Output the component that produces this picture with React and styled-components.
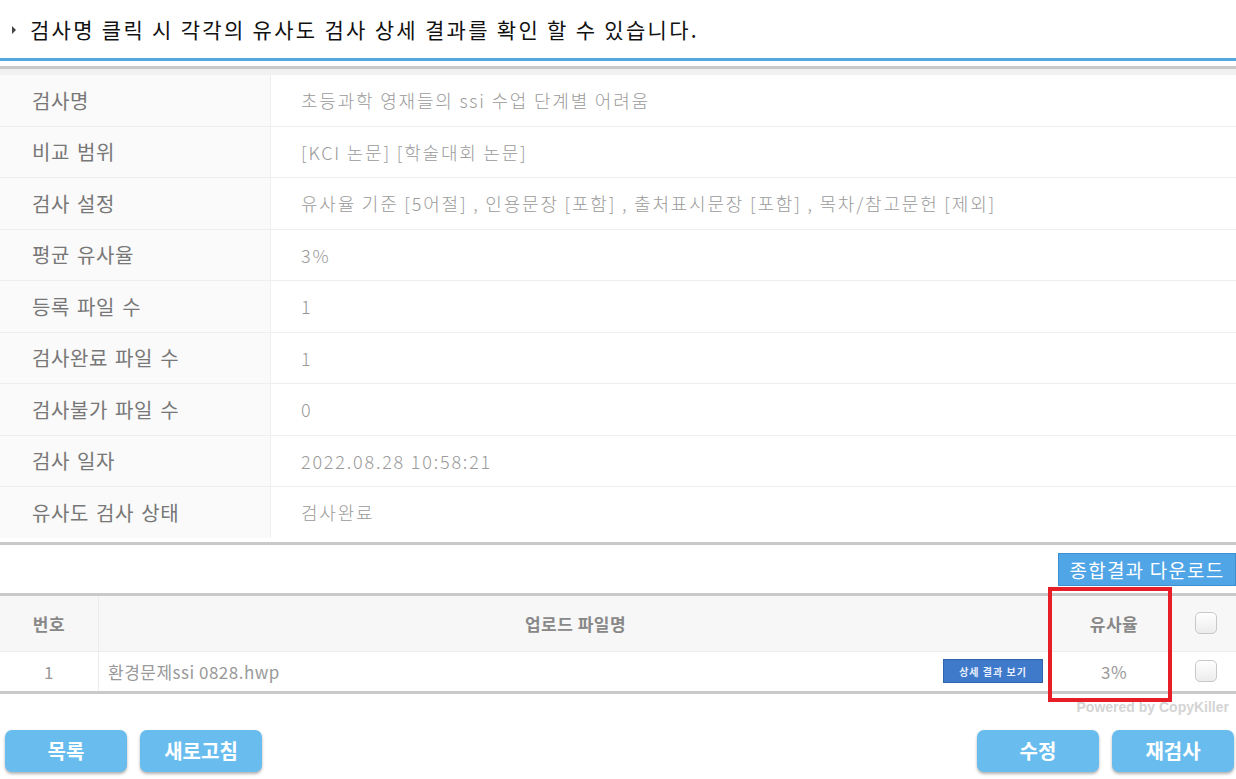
import React from 'react';
import styled, { createGlobalStyle } from 'styled-components';

const GlobalStyle = createGlobalStyle`
  body {
    margin: 0;
    background: #fff;
    font-family: "Noto Sans CJK KR", "Noto Sans", sans-serif;
  }
`;

const info = [
  ['검사명', '초등과학 영재들의 ssi 수업 단계별 어려움'],
  ['비교 범위', '[KCI 논문] [학술대회 논문]'],
  ['검사 설정', '유사율 기준 [5어절] , 인용문장 [포함] , 출처표시문장 [포함] , 목차/참고문헌 [제외]'],
  ['평균 유사율', '3%'],
  ['등록 파일 수', '1'],
  ['검사완료 파일 수', '1'],
  ['검사불가 파일 수', '0'],
  ['검사 일자', '2022.08.28 10:58:21'],
  ['유사도 검사 상태', '검사완료'],
];

const App = () => {
  return (
    <Page>
      <GlobalStyle />
      <Notice>
        <Arrow />
        검사명 클릭 시 각각의 유사도 검사 상세 결과를 확인 할 수 있습니다.
      </Notice>

      <InfoTable>
        {info.map(([label, value], i) => (
          <InfoRow key={label} last={i === info.length - 1}>
            <Label>{label}</Label>
            <Value>{value}</Value>
          </InfoRow>
        ))}
      </InfoTable>

      <DownloadBar>
        <DownloadButton>종합결과 다운로드</DownloadButton>
      </DownloadBar>

      <FileTable>
        <FileRow header>
          <NumCell header>번호</NumCell>
          <NameCell header center>업로드 파일명</NameCell>
          <RateCell header>유사율</RateCell>
          <CheckCell><Checkbox /></CheckCell>
        </FileRow>
        <FileRow>
          <NumCell>1</NumCell>
          <NameCell>
            환경문제ssi 0828.hwp
            <DetailButton>상세 결과 보기</DetailButton>
          </NameCell>
          <RateCell>3%</RateCell>
          <CheckCell><Checkbox /></CheckCell>
        </FileRow>
        <Highlight />
      </FileTable>

      <Powered>Powered by CopyKiller</Powered>

      <Footer>
        <ButtonGroup>
          <ActionButton>목록</ActionButton>
          <ActionButton>새로고침</ActionButton>
        </ButtonGroup>
        <ButtonGroup>
          <ActionButton>수정</ActionButton>
          <ActionButton>재검사</ActionButton>
        </ButtonGroup>
      </Footer>
    </Page>
  );
};

const Page = styled.div`
  width: 1236px;
  height: 779px;
  overflow: hidden;
`;

const Notice = styled.div`
  display: flex;
  align-items: center;
  height: 58px;
  padding-left: 12px;
  font-size: 21px;
  letter-spacing: 2.3px;
  color: #111;
  border-bottom: 3px solid #55a7e0;
`;

const Arrow = styled.span`
  width: 0;
  height: 0;
  border-top: 4px solid transparent;
  border-bottom: 4px solid transparent;
  border-left: 4px solid #444;
  margin-right: 14px;
  margin-top: 2px;
`;

const InfoTable = styled.div`
  margin-top: 5px;
  border-top: 3px solid #c9c9c9;
  padding-top: 6px;
  background: linear-gradient(#f1f1f1, #f1f1f1) top / 100% 6px no-repeat;
  border-bottom: 3px solid #c9c9c9;
  padding-bottom: 4px;
`;

const InfoRow = styled.div`
  display: grid;
  grid-template-columns: 271px 1fr;
  height: ${p => (p.last ? '50.5px' : '51.5px')};
  border-bottom: ${p => (p.last ? 'none' : '1px solid #eeeeee')};
  box-sizing: border-box;
`;

const Label = styled.div`
  display: flex;
  align-items: center;
  padding-left: 32px;
  background: #fafafa;
  border-right: 1px solid #eeeeee;
  color: #777;
  font-size: 20px;
  letter-spacing: 0.6px;
  word-spacing: 2px;
`;

const Value = styled.div`
  display: flex;
  align-items: center;
  padding-left: 30px;
  color: #9a9a9a;
  font-size: 18px;
  letter-spacing: 1.8px;
  font-weight: 300;
`;

const DownloadBar = styled.div`
  display: flex;
  justify-content: flex-end;
  padding-top: 8px;
  height: 41px;
  box-sizing: border-box;
`;

const DownloadButton = styled.button`
  width: 178px;
  height: 33px;
  border: 1px solid #3d8fd0;
  background: #4fa5e6;
  color: #fff;
  font-family: inherit;
  font-size: 19px;
  letter-spacing: 1.2px;
  padding: 0;
  cursor: pointer;
`;

const FileTable = styled.div`
  position: relative;
  margin-top: 7px;
  border-top: 3px solid #c9c9c9;
  border-bottom: 3px solid #c9c9c9;
`;

const FileRow = styled.div`
  display: grid;
  grid-template-columns: 99px 1fr 116px 64px;
  height: ${p => (p.header ? '55px' : '39px')};
  background: ${p => (p.header ? '#f7f7f7' : '#fff')};
  border-bottom: ${p => (p.header ? '1px solid #ececec' : 'none')};
`;

const Cell = styled.div`
  display: flex;
  align-items: center;
  font-size: 17px;
  font-weight: ${p => (p.header ? 700 : 400)};
  color: ${p => (p.header ? '#888' : '#999')};
  letter-spacing: 0.5px;
`;

const NumCell = styled(Cell)`
  justify-content: center;
  border-right: 1px solid #ececec;
`;

const NameCell = styled(Cell)`
  justify-content: ${p => (p.center ? 'center' : 'space-between')};
  padding-left: 9px;
  padding-right: 13px;
`;

const RateCell = styled(Cell)`
  justify-content: center;
`;

const CheckCell = styled.div`
  display: flex;
  align-items: center;
  padding-left: 23px;
`;

const Checkbox = styled.span`
  width: 20px;
  height: 20px;
  border: 1px solid #c8c8c8;
  border-radius: 5px;
  background: linear-gradient(#ffffff, #ececec);
  box-shadow: inset 0 1px 1px rgba(255, 255, 255, 0.8);
`;

const DetailButton = styled.span`
  display: inline-flex;
  align-items: center;
  justify-content: center;
  width: 98px;
  height: 22px;
  background: #3f79c9;
  border: 1px solid #2f63ad;
  color: #e8efff;
  font-size: 10px;
  font-weight: 700;
  letter-spacing: 1px;
`;

const Highlight = styled.div`
  position: absolute;
  left: 1048px;
  top: -9px;
  width: 124px;
  height: 115px;
  box-sizing: border-box;
  border: 4px solid #e61e28;
  pointer-events: none;
`;

const Powered = styled.div`
  text-align: right;
  padding-right: 7px;
  margin-top: 5px;
  font-family: "Liberation Sans", Arial, sans-serif;
  font-size: 14px;
  font-weight: 700;
  color: #d4d4d4;
  height: 20px;
`;

const Footer = styled.div`
  display: flex;
  justify-content: space-between;
  padding: 11px 2px 0 5px;
`;

const ButtonGroup = styled.div`
  display: flex;
  gap: 13px;
`;

const ActionButton = styled.button`
  width: 122px;
  height: 42px;
  border: none;
  border-radius: 7px;
  background: #68bcee;
  color: #fff;
  font-family: inherit;
  font-size: 20px;
  font-weight: 700;
  box-shadow: 0 2px 3px rgba(0, 0, 0, 0.3);
  cursor: pointer;
`;

export default App;
